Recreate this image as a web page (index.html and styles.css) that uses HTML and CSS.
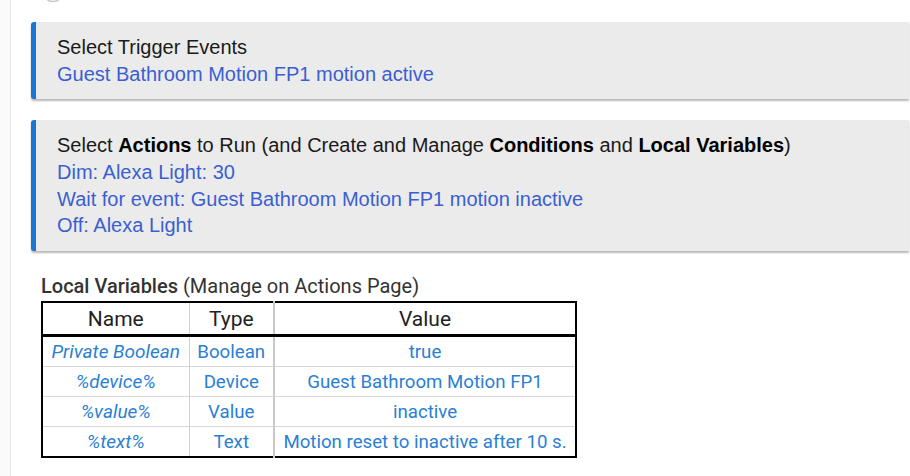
FILE: index.html
```html
<!DOCTYPE html>
<html>
<head>
<meta charset="utf-8">
<link rel="stylesheet" href="styles.css">
</head>
<body>
<div class="page">
  <div class="top-btn"><svg width="24" height="24" viewBox="0 0 24 24"><circle cx="12" cy="12" r="10.5" fill="#fff" stroke="#c8c8c8" stroke-width="1.5"/></svg></div>
  <div class="card card-first">
    <div class="title">Select Trigger Events</div>
    <div class="link">Guest Bathroom Motion FP1 motion active</div>
  </div>
  <div class="card">
    <div class="title">Select <b>Actions</b> to Run (and Create and Manage <b>Conditions</b> and <b>Local Variables</b>)</div>
    <div class="link">Dim: Alexa Light: 30</div>
    <div class="link">Wait for event: Guest Bathroom Motion FP1 motion inactive</div>
    <div class="link">Off: Alexa Light</div>
  </div>
  <div class="vars">
    <div class="vars-head"><b>Local Variables</b> (Manage on Actions Page)</div>
    <table class="vtable">
      <colgroup><col class="c-name"><col class="c-type"><col class="c-value"></colgroup>
      <thead>
        <tr><th>Name</th><th class="type-col">Type</th><th>Value</th></tr>
      </thead>
      <tbody>
        <tr><td class="nm">Private Boolean</td><td class="type-col">Boolean</td><td>true</td></tr>
        <tr><td class="nm">%device%</td><td class="type-col">Device</td><td>Guest Bathroom Motion FP1</td></tr>
        <tr><td class="nm">%value%</td><td class="type-col">Value</td><td>inactive</td></tr>
        <tr><td class="nm">%text%</td><td class="type-col">Text</td><td>Motion reset to inactive after 10 s.</td></tr>
      </tbody>
    </table>
  </div>
</div>
</body>
</html>
```
FILE: styles.css
```css
html, body {
  margin: 0;
  padding: 0;
  background: #fafafa;
}
.page {
  margin-left: 10px;
  min-height: 476px;
  background: #fff;
  border-left: 1px solid #e6e6e6;
  padding: 0 1px 0 20px;
  overflow: hidden;
}
.top-btn {
  display: flow-root;
  margin-left: 10px;
  height: 3px;
  overflow: hidden;
}
.top-btn svg {
  display: block;
  margin-top: -21px;
}
.card {
  background: #ebebeb;
  border-left: 5px solid #1976d2;
  border-radius: 3px 0 0 3px;
  box-shadow: 0 2px 2px rgba(0,0,0,0.28);
  padding: 12px 12px 12px 21px;
  font-family: "Liberation Sans", Arial, sans-serif;
  font-size: 20px;
  line-height: 26.67px;
  margin-bottom: 21px;
}
.card-first {
  margin-top: 19px;
}
.title {
  color: #1a1a1a;
}
.title b {
  font-weight: bold;
  color: #000;
}
.link {
  color: #3b5fd0;
}
.vars {
  margin-left: 10px;
  margin-top: 22px;
  font-family: Roboto, "Noto Sans", sans-serif;
}
.vars-head {
  font-size: 20px;
  line-height: 26px;
  color: #333;
  margin-bottom: 2px;
}
.vars-head b {
  font-weight: 500;
}
.vtable {
  border-collapse: collapse;
  table-layout: fixed;
  width: 534px;
  border: 2px solid #000;
}
.c-name { width: 147px; }
.c-type { width: 85px; }
.c-value { width: 302px; }
.vtable th {
  font-weight: 400;
  font-size: 21px;
  color: #222;
  height: 31px;
  padding: 0;
  border-bottom: 3px solid #000;
  border-right: 1px solid #cfcfcf;
}
.vtable td {
  font-size: 18.67px;
  color: #2a7fd4;
  text-align: center;
  height: 29px;
  padding: 0;
  border-top: 1px solid #d8d8d8;
  border-right: 1px solid #cfcfcf;
  white-space: nowrap;
}
.vtable th.type-col, .vtable td.type-col {
  border-right: 2px solid #c8c8c8;
}
.vtable td.nm {
  font-style: italic;
  font-size: 19px;
}
```
